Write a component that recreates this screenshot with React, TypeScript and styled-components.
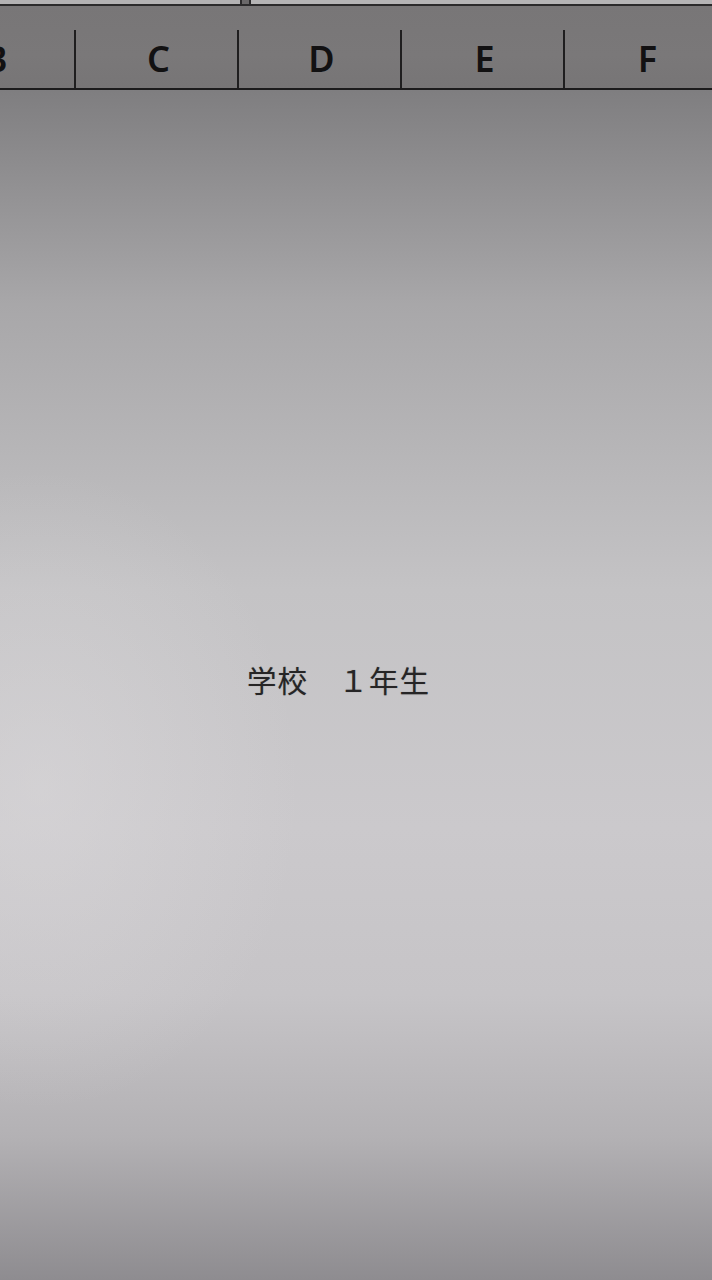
import styled, { createGlobalStyle } from "styled-components";

const columns = ["B", "C", "D", "E", "F"];

export default function App() {
  return (
    <>
      <GlobalStyle />
      <Screen>
        <TopBar>
          <NameBox />
          <FormulaBox />
        </TopBar>
        <HeaderRow>
          {columns.map((col) => (
            <ColumnHeader key={col}>
              <ColumnLabel>{col}</ColumnLabel>
            </ColumnHeader>
          ))}
        </HeaderRow>
        <Sheet>
          <CellText>学校　１年生</CellText>
        </Sheet>
      </Screen>
    </>
  );
}

const GlobalStyle = createGlobalStyle`
  html, body {
    margin: 0;
    padding: 0;
    background: #8e8c90;
  }
  * {
    box-sizing: border-box;
  }
`;

const Screen = styled.div`
  width: 712px;
  height: 1280px;
  display: flex;
  flex-direction: column;
  overflow: hidden;
`;

const TopBar = styled.div`
  height: 6px;
  display: flex;
  gap: 7px;
  background: #6a6869;
  border-bottom: 2px solid #2b2a2b;
`;

const NameBox = styled.div`
  width: 242px;
  background: #b3b2b3;
  border-right: 2px solid #2b2a2b;
`;

const FormulaBox = styled.div`
  flex: 1;
  background: #b5b4b5;
  border-left: 2px solid #2b2a2b;
`;

const HeaderRow = styled.div`
  height: 84px;
  display: flex;
  margin-left: -87px;
  background: linear-gradient(180deg, #787677 0%, #7a7879 60%, #777576 100%);
  border-bottom: 2px solid #1c1b1c;
`;

const ColumnHeader = styled.div`
  flex: 0 0 163px;
  display: flex;
  flex-direction: column;
  padding-top: 24px;
`;

const ColumnLabel = styled.div`
  flex: 1;
  display: flex;
  align-items: center;
  justify-content: center;
  border-right: 2px solid #1f1e1f;
  font-family: "Noto Sans", "Liberation Sans", sans-serif;
  font-size: 36px;
  font-weight: 600;
  color: #121112;
  padding: 0 0 2px 4px;
`;

const Sheet = styled.div`
  flex: 1;
  display: flex;
  align-items: flex-start;
  padding: 571px 0 0 247px;
  background:
    radial-gradient(ellipse 260px 320px at 40px 700px, rgba(222, 220, 222, 0.45), rgba(222, 220, 222, 0) 100%),
    linear-gradient(
      180deg,
      #7f7e80 0%,
      #a8a7a9 18%,
      #c4c3c5 42%,
      #cbc9cc 62%,
      #c6c4c7 76%,
      #b3b1b4 88%,
      #8e8c90 100%
    );
`;

const CellText = styled.span`
  font-family: "Noto Sans CJK JP", "Noto Sans", sans-serif;
  font-size: 29.5px;
  line-height: 36px;
  color: #262526;
  letter-spacing: 1px;
  text-shadow: 0 0 1px rgba(38, 37, 38, 0.4);
  white-space: pre;
`;
